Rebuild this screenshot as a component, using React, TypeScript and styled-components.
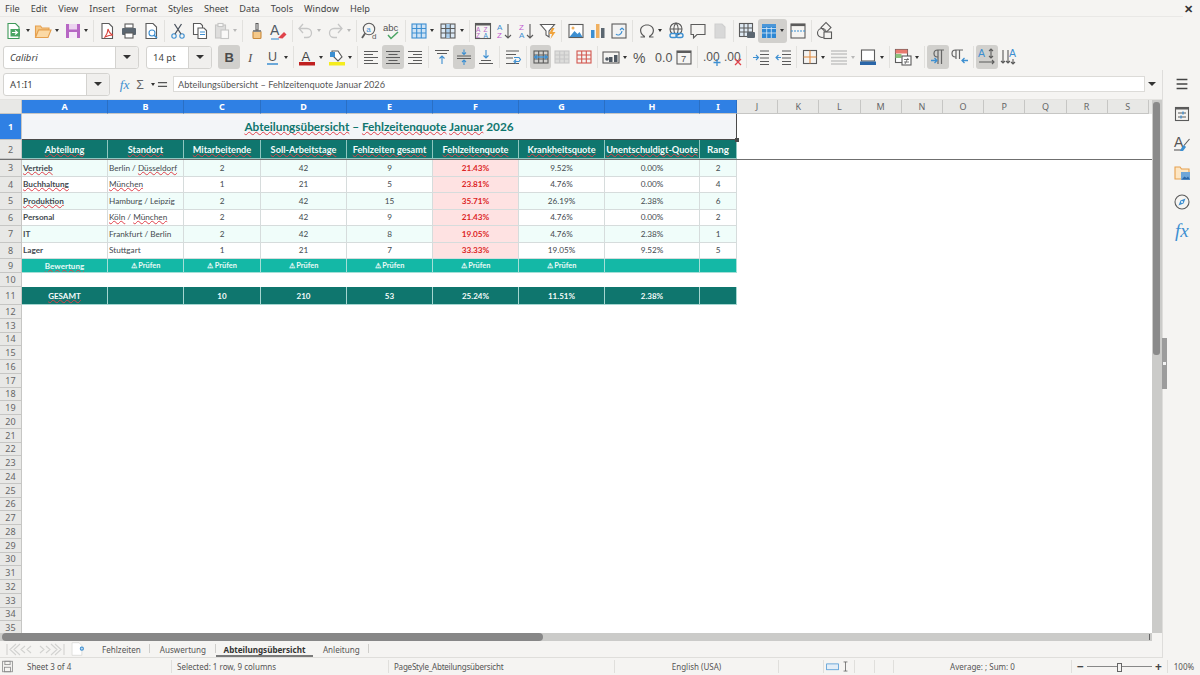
import { ReactNode } from "react";
import styled, { createGlobalStyle } from "styled-components";

const GlobalStyle = createGlobalStyle`
  html, body { margin: 0; padding: 0; background: #f5f4f2; }
  * { box-sizing: border-box; }
`;

const UI_FONT = `"Noto Sans", "Open Sans", sans-serif`;
const CELL_FONT = `Lato, "Liberation Sans", sans-serif`;

const BLUE = "#3d8fd1";
const GREY = "#5b5b5b";

const Page = styled.div`
  width: 1200px;
  height: 675px;
  display: flex;
  flex-direction: column;
  overflow: hidden;
  background: #f5f4f2;
  font-family: ${UI_FONT};
  color: #3c3c3c;
`;

const MenuBar = styled.div`
  height: 17px;
  display: flex;
  align-items: center;
  padding: 0 0 1px 5px;
  gap: 11px;
  font-size: 9.2px;
  color: #444;
  position: relative;
  &::after {
    content: "";
    position: absolute;
    left: 0;
    right: 17px;
    bottom: 0;
    height: 1px;
    background: #e9e8e6;
  }
`;

const CloseMark = styled.span`
  margin-left: auto;
  margin-right: 7px;
  font-size: 11px;
  font-weight: 700;
  color: #333;
`;

const Toolbar = styled.div<{ $h: number; $pl: number }>`
  height: ${(p) => p.$h}px;
  padding-left: ${(p) => p.$pl}px;
  display: flex;
  align-items: center;
`;

const ToolButton = styled.div<{ $active?: boolean; $drop?: boolean }>`
  width: ${(p) => (p.$drop ? 29.3 : 21.8)}px;
  height: 24px;
  flex: none;
  display: flex;
  align-items: center;
  padding-left: 1px;
  border-radius: 3px;
  background: ${(p) => (p.$active ? "#d1d0cd" : "transparent")};
`;

const Arrow = styled.span<{ $off?: boolean }>`
  width: 0;
  height: 0;
  margin-left: 1.5px;
  border-left: 2.5px solid transparent;
  border-right: 2.5px solid transparent;
  border-top: 3px solid ${(p) => (p.$off ? "#b8b8b8" : "#333")};
`;

const ToolSep = styled.div`
  width: 5.5px;
  height: 22px;
  flex: none;
  display: flex;
  justify-content: center;
  &::after {
    content: "";
    width: 1px;
    background: #e2e1de;
  }
`;

const Combo = styled.div<{ $w: number; $arrow: number; $mr?: number }>`
  width: ${(p) => p.$w}px;
  height: 23px;
  margin-right: ${(p) => p.$mr ?? 0}px;
  flex: none;
  display: grid;
  grid-template-columns: 1fr ${(p) => p.$arrow}px;
  background: #fff;
  border: 1px solid #d4d3d0;
  border-radius: 3px;
  font-size: 9.5px;
  color: #444;
`;

const ComboText = styled.span<{ $italic?: boolean }>`
  display: flex;
  align-items: center;
  padding-left: 6px;
  font-style: ${(p) => (p.$italic ? "italic" : "normal")};
`;

const ComboArrow = styled.span`
  display: flex;
  align-items: center;
  justify-content: center;
  background: #f0efed;
  border-left: 1px solid #d4d3d0;
  border-radius: 0 3px 3px 0;
  & > span {
    border-left-width: 4px;
    border-right-width: 4px;
    border-top-width: 4px;
    margin: 0;
  }
`;

const Body = styled.div`
  flex: 1;
  min-height: 0;
  display: flex;
`;

const Workspace = styled.div`
  flex: 1;
  min-width: 0;
  display: flex;
  flex-direction: column;
`;

const FormulaBar = styled.div`
  height: 30px;
  flex: none;
  display: flex;
  align-items: center;
  padding: 0 3px 1px 3px;
  border-bottom: 1px solid #e4e3e0;
`;

const FormulaIcons = styled.div`
  width: 63px;
  flex: none;
  display: flex;
  align-items: center;
  gap: 1px;
  padding-left: 9px;
`;

const FormulaInput = styled.div`
  flex: 1;
  height: 16px;
  display: flex;
  align-items: center;
  padding-left: 4px;
  background: #fff;
  border: 1px solid #dcdbd8;
  font-size: 9.2px;
  color: #555;
  font-family: ${CELL_FONT};
`;

const FormulaDrop = styled.div`
  width: 14px;
  display: flex;
  justify-content: center;
  & > span {
    border-left-width: 4px;
    border-right-width: 4px;
    border-top-width: 4px;
    margin: 0;
  }
`;

const SheetRow = styled.div`
  flex: 1;
  min-height: 0;
  display: flex;
  background: #fff;
`;

const Sheet = styled.div`
  flex: 1;
  min-width: 0;
  overflow: hidden;
  font-family: ${CELL_FONT};
`;

const COLUMNS = "22px 86px 76px 77px 86px 86px 86px 86px 95px 37px repeat(10, 41.2px) 1fr";

const HeadRow = styled.div`
  height: 14px;
  display: grid;
  grid-template-columns: ${COLUMNS};
  background: #e8e8e6;
`;

const ColHead = styled.div<{ $on?: boolean }>`
  display: flex;
  align-items: center;
  justify-content: center;
  font-size: 9px;
  font-family: ${UI_FONT};
  background: ${(p) => (p.$on ? "#2f80e4" : "#e8e8e6")};
  color: ${(p) => (p.$on ? "#fff" : "#666")};
  font-weight: ${(p) => (p.$on ? 700 : 400)};
  border-right: 1px solid ${(p) => (p.$on ? "#2a6fc4" : "#c6c6c4")};
  border-bottom: 1px solid #c6c6c4;
`;

const Row = styled.div<{ $h: number; $freeze?: boolean }>`
  height: ${(p) => p.$h}px;
  display: grid;
  grid-template-columns: ${COLUMNS};
  border-bottom: ${(p) => (p.$freeze ? "1.5px solid #6f6f6f" : "none")};
`;

const RowHead = styled.div<{ $on?: boolean }>`
  display: flex;
  align-items: center;
  justify-content: center;
  font-size: 9px;
  line-height: 1;
  font-family: ${UI_FONT};
  background: ${(p) => (p.$on ? "#2f80e4" : "#e8e8e6")};
  color: ${(p) => (p.$on ? "#fff" : "#666")};
  font-weight: ${(p) => (p.$on ? 700 : 400)};
  border-right: 1px solid #c6c6c4;
  border-bottom: 1px solid #c6c6c4;
`;

type Tone = "head" | "odd" | "even" | "rate" | "check" | "total";

const toneBg: Record<Tone, string> = {
  head: "#0f766e",
  odd: "#f0fdfa",
  even: "#ffffff",
  rate: "#fee2e2",
  check: "#14b8a6",
  total: "#0f766e",
};

const toneBorder: Record<Tone, string> = {
  head: "#8fc7c0",
  odd: "#d6dcdc",
  even: "#d6dcdc",
  rate: "#d6dcdc",
  check: "#a5dfd7",
  total: "#a5d6d0",
};

const toneText: Record<Tone, string> = {
  head: "#f4fbfa",
  odd: "#444a4f",
  even: "#444a4f",
  rate: "#dc2626",
  check: "#eafaf7",
  total: "#f4fbfa",
};

const Cell = styled.div<{ $tone: Tone; $left?: boolean; $bold?: boolean; $size?: number }>`
  display: flex;
  align-items: center;
  justify-content: ${(p) => (p.$left ? "flex-start" : "center")};
  padding-left: ${(p) => (p.$left ? 1 : 0)}px;
  white-space: nowrap;
  overflow: hidden;
  font-size: ${(p) => p.$size ?? 8.2}px;
  font-weight: ${(p) => (p.$bold ? 700 : 400)};
  background: ${(p) => toneBg[p.$tone]};
  color: ${(p) => toneText[p.$tone]};
  border-right: 1px solid ${(p) => toneBorder[p.$tone]};
  border-bottom: 1px solid ${(p) => toneBorder[p.$tone]};
`;

const TitleCell = styled.div`
  grid-column: 2 / span 9;
  position: relative;
  display: flex;
  align-items: center;
  justify-content: center;
  padding-bottom: 1px;
  background: #f3f5f8;
  color: #0f766e;
  font-size: 11.8px;
  font-weight: 700;
  border-right: 1.5px solid #4a4a4a;
  border-bottom: 1.5px solid #4a4a4a;
  &::after {
    content: "";
    position: absolute;
    right: -3px;
    bottom: -3px;
    width: 4px;
    height: 4px;
    background: #4a4a4a;
  }
`;

const Spell = styled.span`
  text-decoration: underline wavy #e0404a 0.8px;
  text-underline-offset: 0;
  text-decoration-skip-ink: none;
`;

const VScroll = styled.div`
  width: 10px;
  flex: none;
  background: #cbcbc9;
  padding: 2px 2px 0 1px;
`;

const VThumb = styled.div`
  height: 253px;
  background: #8a8a8a;
  border-radius: 3px;
`;

const HScroll = styled.div`
  height: 8px;
  width: 1152px;
  flex: none;
  padding-left: 2px;
  background: #cbcbc9;
  position: relative;
  &::after {
    content: "";
    position: absolute;
    right: 2px;
    top: 1px;
    width: 1px;
    height: 6px;
    background: #666;
  }
`;

const HThumb = styled.div`
  width: 541px;
  height: 100%;
  background: #878787;
  border-radius: 4px;
`;

const TabBar = styled.div`
  height: 17px;
  flex: none;
  display: flex;
  align-items: center;
  padding-left: 6px;
  font-size: 8.1px;
  color: #555;
  border-bottom: 1px solid #dfdedb;
`;

const NavGroup = styled.div`
  width: 59px;
  flex: none;
  display: flex;
  align-items: center;
`;

const NewSheet = styled.div`
  width: 27.5px;
  flex: none;
  display: flex;
  padding-left: 6px;
`;

const Tab = styled.div<{ $on?: boolean }>`
  height: 16px;
  display: flex;
  align-items: center;
  padding: 0 ${(p) => (p.$on ? 8 : 9.5)}px;
  font-weight: ${(p) => (p.$on ? 700 : 400)};
  color: ${(p) => (p.$on ? "#333" : "#555")};
  box-shadow: ${(p) => (p.$on ? "inset 0 -2px 0 #7a7a7a" : "none")};
  position: relative;
  &::after {
    content: "";
    position: absolute;
    right: 0;
    top: 3px;
    bottom: 4px;
    width: 1px;
    background: ${(p) => (p.$on ? "transparent" : "#cfcecb")};
  }
`;

const Deck = styled.div`
  width: 38px;
  flex: none;
  display: flex;
  flex-direction: column;
  align-items: center;
  padding-top: 4px;
  gap: 9.2px;
  border-left: 1px solid #dedddb;
  position: relative;
`;

const DeckHandle = styled.div`
  position: absolute;
  left: -1px;
  top: 268px;
  width: 5px;
  height: 51px;
  background: #9c9c9c;
  &::after {
    content: "";
    position: absolute;
    left: 1px;
    top: 24px;
    width: 3px;
    height: 3px;
    background: #f2f2f2;
  }
`;

const DeckMenu = styled.div`
  height: 20px;
  margin-bottom: 1px;
  display: flex;
  align-items: center;
`;

const StatusBar = styled.div`
  height: 17px;
  flex: none;
  display: grid;
  grid-template-columns: 22px 150px 217px 226px 164px 45px 31px 20px 19px 178px 96px 1fr;
  align-items: center;
  font-size: 8px;
  color: #555;
`;

const StatusCell = styled.div<{ $center?: boolean; $tight?: boolean }>`
  height: 13px;
  display: flex;
  align-items: center;
  justify-content: ${(p) => (p.$center ? "center" : "flex-start")};
  padding-left: ${(p) => (p.$center ? 0 : 5)}px;
  letter-spacing: ${(p) => (p.$tight ? "-0.22px" : "0")};
  border-right: 1px solid #e0dfdc;
  white-space: nowrap;
`;

const StatusLast = styled.div`
  display: flex;
  justify-content: center;
`;

const Zoom = styled.div`
  display: flex;
  align-items: center;
  justify-content: center;
  gap: 3px;
  height: 13px;
  font-size: 12px;
  font-weight: 700;
  border-right: 1px solid #e0dfdc;
  color: #444;
`;

const ZoomTrack = styled.div`
  width: 65px;
  height: 1px;
  background: #888;
  position: relative;
  &::after {
    content: "";
    position: absolute;
    left: 30px;
    top: -3px;
    width: 3px;
    height: 7px;
    background: #f5f4f2;
    border: 1px solid #666;
  }
`;

const Svg = ({ children, size = 20 }: { children: ReactNode; size?: number }) => (
  <svg width={size} height={size} viewBox="0 0 20 20" fill="none" strokeWidth="1.1">
    {children}
  </svg>
);

const Txt = ({ x, y, s, c, w, i, serif, t }: { x: number; y: number; s: number; c: string; w?: number; i?: boolean; serif?: boolean; t: string }) => (
  <text
    x={x}
    y={y}
    fontSize={s}
    fill={c}
    fontWeight={w}
    fontStyle={i ? "italic" : "normal"}
    fontFamily={serif ? "'Liberation Serif', serif" : "'Liberation Sans', sans-serif"}
    stroke="none"
  >
    {t}
  </text>
);

const gridLines = (c: string, fill = "none") => (
  <g stroke={c}>
    <rect x="3" y="4" width="14" height="12" fill={fill} />
    <path d="M3 8h14M3 12h14M7.7 4v12M12.3 4v12" />
  </g>
);

const icons: Record<string, ReactNode> = {
  newDoc: (
    <>
      <path d="M4 2.5h7.5l3.5 3.5v11.5H4z" stroke="#3f9a5a" fill="#fff" />
      <rect x="6.5" y="8" width="9.5" height="7.5" fill="#4aa564" />
      <path d="M8 11.5h5M11 9.5l2.5 2-2.5 2" stroke="#fff" />
    </>
  ),
  open: (
    <>
      <path d="M2.5 5h5l1.5 2h7v2H6L2.5 16z" fill="#f5c98a" stroke="#e6a04e" />
      <path d="M5.5 9h12.5l-3 7.5H2.5z" fill="#fbd9a5" stroke="#e6a04e" />
    </>
  ),
  save: (
    <>
      <path d="M3 3h14v14H3z" fill="#b767c4" />
      <rect x="6" y="3" width="8" height="5.5" fill="#ecd3f0" />
      <rect x="6" y="11" width="8" height="6" fill="#f6e9f8" />
    </>
  ),
  pdf: (
    <>
      <path d="M5 2.5h7l3.5 3.5v11.5H5z" stroke={GREY} fill="#fff" />
      <path d="M8 16c2-3 3-6 3-8 1 3 2 5 5 6-3 0-6 1-8 2z" stroke="#d8433c" />
    </>
  ),
  print: (
    <>
      <rect x="6" y="3" width="8" height="4" fill="#fff" stroke={GREY} />
      <rect x="3" y="7" width="14" height="7" rx="1" fill="#5b6670" />
      <rect x="6" y="12" width="8" height="5" fill="#fff" stroke={GREY} />
    </>
  ),
  preview: (
    <>
      <path d="M5 2.5h7l3.5 3.5v11.5H5z" stroke={GREY} fill="#fff" />
      <circle cx="11" cy="12" r="3" stroke={BLUE} />
      <path d="M13 14l3 3" stroke={BLUE} strokeWidth="1.5" />
    </>
  ),
  cut: (
    <g stroke={BLUE}>
      <circle cx="6" cy="15" r="2.2" />
      <circle cx="14" cy="15" r="2.2" />
      <path d="M7 13L13.5 3M13 13L6.5 3" stroke="#4d5560" strokeWidth="1.3" />
    </g>
  ),
  copy: (
    <g stroke={GREY} fill="#fff">
      <path d="M3.5 2.5h7l2 2v9h-9z" />
      <path d="M8 7h6l2.5 2.5v8H8z" />
      <path d="M10 11h5M10 13.5h5" stroke={BLUE} />
    </g>
  ),
  paste: (
    <g opacity=".5">
      <rect x="3.5" y="4" width="10" height="13" fill="#c8c8c8" stroke="#999" />
      <rect x="6" y="2.5" width="5" height="3" fill="#fff" stroke="#999" />
      <rect x="9" y="9" width="7.5" height="8.5" fill="#fff" stroke="#999" />
    </g>
  ),
  clone: (
    <>
      <rect x="6" y="10" width="8" height="7.5" rx="1" fill="#f5c98a" stroke="#c98a3c" />
      <path d="M6 9h8v2H6z" fill="#888" />
      <path d="M9 2.5h2V9H9z" fill="#fff" stroke={GREY} />
    </>
  ),
  clear: (
    <>
      <Txt x={2} y={14} s={14} c="#4f5862" t="A" />
      <path d="M10 17l6-6 2.5 2.5-4 4z" fill="#e0434b" />
      <path d="M3 18h8" stroke={BLUE} />
    </>
  ),
  undo: <path d="M7 3L3 7.5 7 12M3 7.5h8a4.5 4.5 0 0 1 0 9H8" stroke="#c6c6c6" strokeWidth="1.3" />,
  redo: <path d="M13 3l4 4.5-4 4.5M17 7.5H9a4.5 4.5 0 0 0 0 9h3" stroke="#c6c6c6" strokeWidth="1.3" />,
  find: (
    <>
      <circle cx="9" cy="8" r="5.7" stroke={GREY} />
      <path d="M5 12.5L2 17" stroke={GREY} strokeWidth="1.8" />
      <Txt x={6.3} y={10.5} s={8} c={BLUE} t="a" />
      <Txt x={12} y={18} s={8} c={GREY} t="d" />
    </>
  ),
  spell: (
    <>
      <Txt x={1} y={10} s={9.5} c="#555" t="abc" />
      <path d="M6 14l3 3.5L16 11" stroke="#4aa564" strokeWidth="1.5" />
    </>
  ),
  tableRows: (
    <>
      <rect x="3" y="3" width="14" height="14" fill="#cfe3f5" stroke={BLUE} />
      <path d="M3 7.5h14M3 12h14M7.7 3v14M12.3 3v14" stroke={BLUE} />
    </>
  ),
  tableCols: (
    <>
      <rect x="3" y="3" width="14" height="14" fill="#dbe9f5" stroke={GREY} />
      <rect x="7.7" y="3" width="4.6" height="14" fill="#a9cdec" />
      <path d="M3 7.5h14M3 12h14M7.7 3v14M12.3 3v14" stroke={GREY} />
    </>
  ),
  sortBox: (
    <>
      <rect x="2.5" y="2.5" width="15" height="15" stroke={GREY} />
      <path d="M2.5 3.5h15" stroke={GREY} strokeWidth="2" />
      <Txt x={3} y={10.5} s={6.5} c="#b767c4" t="A" />
      <Txt x={10.5} y={10.5} s={6.5} c="#b767c4" t="Z" />
      <Txt x={3} y={16.5} s={6.5} c="#b767c4" t="Z" />
      <Txt x={10.5} y={16.5} s={6.5} c={BLUE} t="A" />
    </>
  ),
  sortAz: (
    <>
      <Txt x={2} y={9} s={8} c={BLUE} t="A" />
      <Txt x={2} y={17} s={8} c="#c15bd0" t="Z" />
      <path d="M13 3v14M10 14l3 3 3-3" stroke={GREY} />
    </>
  ),
  sortZa: (
    <>
      <Txt x={2} y={9} s={8} c="#c15bd0" t="Z" />
      <Txt x={2} y={17} s={8} c={BLUE} t="A" />
      <path d="M13 3v14M10 14l3 3 3-3" stroke={GREY} />
    </>
  ),
  filter: (
    <>
      <path d="M2.5 3.5h14L11 10v6l-3-2v-4z" stroke={GREY} fill="#fff" />
      <path d="M14 7l-3 6h3l-1.5 5 5-7h-3l2-4z" fill="#f0a33c" />
    </>
  ),
  image: (
    <>
      <rect x="3" y="3.5" width="14" height="13" stroke={GREY} fill="#fff" />
      <path d="M3.5 16l5-6 3 3 2-2 3 5z" fill={BLUE} />
      <circle cx="7" cy="7" r="1.5" fill="#f0b060" />
    </>
  ),
  chart: (
    <>
      <rect x="3" y="9" width="3.5" height="8" fill={BLUE} />
      <rect x="8" y="3" width="3.5" height="14" fill="#f0b060" />
      <rect x="13" y="7" width="3.5" height="10" fill="#5b6670" />
    </>
  ),
  pivot: (
    <>
      <rect x="3" y="3" width="14" height="14" stroke={GREY} fill="#f2f2f2" />
      <path d="M7 13c1 1.5 5 2 6-3M13 7l-2 2M13 7l2 2" stroke={BLUE} />
    </>
  ),
  omega: <path d="M8 16.5H3.5v-1H6.500C4.500 14 3 12 3 9.500 3 6 6 3.500 10 3.500s7 2.500 7 6c0 2.500-1.500 4.500-3.500 6h3v1H12v-1.500c2-1.200 3.800-3.200 3.800-5.500 0-3-2.500-5-5.800-5s-5.800 2-5.800 5c0 2.300 1.800 4.300 3.800 5.500z" fill={GREY} />,
  link: (
    <>
      <circle cx="10" cy="8" r="6" stroke={GREY} />
      <path d="M4 8h12M10 2c-3 3-3 9 0 12M10 2c3 3 3 9 0 12" stroke={GREY} />
      <rect x="4" y="12.5" width="7" height="4" rx="2" stroke={BLUE} strokeWidth="1.4" fill="#f5f4f2" />
      <rect x="10" y="12.5" width="7" height="4" rx="2" stroke={BLUE} strokeWidth="1.4" />
    </>
  ),
  comment: <path d="M3 3.5h14v10H9l-3.5 3.5v-3.5H3z" stroke={GREY} />,
  headers: <path d="M5 3h7l3 3v11H5z" fill="#d8d8d8" stroke="#cfcfcf" />,
  defPrint: (
    <>
      <rect x="2.5" y="2.5" width="13" height="13" stroke={GREY} fill="#dfeaf4" />
      <path d="M2.5 7h13M2.5 11h13M7 2.5v13M11 2.5v13" stroke={GREY} />
      <rect x="10" y="11" width="8" height="6" rx="1" fill="#5b6670" />
    </>
  ),
  freeze: (
    <>
      <rect x="3" y="3" width="14" height="14" fill="#2d87d3" />
      <path d="M3 7.5h14M3 12h14M7.7 3v14M12.3 3v14" stroke="#dcebf7" strokeWidth=".8" />
      <path d="M3 3h14v3H3z" fill="#4a96d8" />
    </>
  ),
  split: (
    <>
      <rect x="3" y="3" width="14" height="14" stroke={GREY} />
      <path d="M3 4h14" stroke={GREY} strokeWidth="2.2" />
      <path d="M3 10h14" stroke={BLUE} strokeDasharray="2 1" />
    </>
  ),
  shapes: (
    <>
      <rect x="7.5" y="3" width="7" height="7" transform="rotate(45 11 6.5)" stroke={GREY} />
      <circle cx="7" cy="12" r="4.5" stroke={GREY} />
      <rect x="9" y="11" width="7.5" height="6.5" stroke={GREY} fill="#f5f4f2" />
    </>
  ),
  bold: <Txt x={5.5} y={15} s={13} w={700} c="#4a4a4a" t="B" />,
  italic: <Txt x={7} y={15} s={13} i c="#555" t="I" serif />,
  underline: (
    <>
      <Txt x={5} y={14} s={12.5} c="#555" t="U" />
      <path d="M4 17h11" stroke={BLUE} strokeWidth="1.5" />
    </>
  ),
  fontColor: (
    <>
      <Txt x={4.5} y={13.5} s={13} c="#444" t="A" />
      <rect x="2" y="15" width="16" height="3.5" fill="#c02020" />
    </>
  ),
  bgColor: (
    <>
      <path d="M5 4h6l4 6-4 4-6-6z" stroke={GREY} fill="#fff" />
      <path d="M3 5h5v5H3z" fill={BLUE} />
      <rect x="2" y="15" width="16" height="3.5" fill="#f5ec1e" />
    </>
  ),
  alignL: <path d="M3 4.5h14M3 7.5h9M3 10.5h14M3 13.5h9M3 16.5h14" stroke={GREY} />,
  alignC: <path d="M3 4.5h14M5.5 7.5h9M3 10.5h14M5.5 13.5h9M3 16.5h14" stroke={GREY} />,
  alignR: <path d="M3 4.5h14M8 7.5h9M3 10.5h14M8 13.5h9M3 16.5h14" stroke={GREY} />,
  vTop: (
    <>
      <path d="M3 3.5h14M5 6.5h10" stroke={GREY} />
      <path d="M10 17V9M7.5 11.5L10 9l2.5 2.5" stroke={BLUE} />
    </>
  ),
  vCenter: (
    <>
      <path d="M3 9h14M3 11.5h14" stroke={GREY} />
      <path d="M10 2.5v5M8 5.5l2 2 2-2M10 18v-5M8 15l2-2 2 2" stroke={BLUE} />
    </>
  ),
  vBottom: (
    <>
      <path d="M3 16.5h14M5 13.5h10" stroke={GREY} />
      <path d="M10 3v8M7.5 8.5L10 11l2.5-2.5" stroke={BLUE} />
    </>
  ),
  wrap: (
    <>
      <path d="M3 4h13M3 7.5h10M3 11h7M3 16.5h13" stroke={GREY} />
      <path d="M11 10.5h5l1.5 2-1.5 2h-4M13 12.5l-2 2 2 2" stroke={BLUE} />
    </>
  ),
  merge: (
    <>
      {gridLines(GREY)}
      <path d="M3 10h14M6 8l-2 2 2 2M14 8l2 2-2 2" stroke={BLUE} strokeWidth="1.3" />
    </>
  ),
  mergeOff: gridLines("#c6c6c6", "#dddddb"),
  unmerge: gridLines("#d2574f"),
  numFmt: (
    <>
      <rect x="2" y="5" width="16" height="11" stroke={GREY} />
      <rect x="8" y="10" width="3.5" height="5" fill="#4f5862" />
      <rect x="13" y="8" width="3.5" height="7" fill="#4f5862" />
      <circle cx="6" cy="12" r="1.8" fill="#4f5862" />
    </>
  ),
  percent: <Txt x={2} y={15.5} s={14} c="#555" t="%" />,
  numZero: <Txt x={2} y={15} s={12.5} c="#555" t="0.0" />,
  date: (
    <>
      <rect x="3" y="4" width="14" height="13" stroke={GREY} />
      <path d="M3 5h14" stroke={GREY} strokeWidth="2" />
      <Txt x={7} y={15} s={9.5} c="#555" t="7" />
    </>
  ),
  addDec: (
    <>
      <Txt x={1} y={14} s={12} c="#555" t=".00" />
      <path d="M15 12v7M11.5 15.5h7" stroke={BLUE} strokeWidth="1.3" />
    </>
  ),
  delDec: (
    <>
      <Txt x={1} y={14} s={12} c="#555" t=".00" />
      <path d="M12 12l6 6M18 12l-6 6" stroke="#e0434b" strokeWidth="1.3" />
    </>
  ),
  indent: (
    <>
      <path d="M9 4h9M9 7.5h9M9 11h9M9 14.5h9M9 17.5h9" stroke={GREY} />
      <path d="M2 10.5h5M5 8l2.5 2.5L5 13" stroke={BLUE} />
    </>
  ),
  outdent: (
    <>
      <path d="M9 4h9M9 7.5h9M9 11h9M9 14.5h9M9 17.5h9" stroke={GREY} />
      <path d="M8 10.5H3M5.5 8L3 10.5 5.5 13" stroke={BLUE} />
    </>
  ),
  borders: (
    <>
      <rect x="3.5" y="3.5" width="13" height="13" stroke={GREY} />
      <path d="M10 3.5v13M3.5 10h13" stroke="#e0893c" />
    </>
  ),
  borderStyle: <path d="M2 4h16M2 7h16M2 10.5h16M2 14h16M2 17h16" stroke="#c4c4c4" strokeWidth="1.3" />,
  borderColor: (
    <>
      <rect x="3.5" y="3" width="13" height="11" fill="#fff" stroke={GREY} />
      <rect x="2" y="14.5" width="16" height="3.5" fill="#2a66a8" />
    </>
  ),
  cond: (
    <>
      <rect x="2.5" y="2.5" width="12" height="13" stroke={GREY} fill="#fff" />
      <rect x="2.5" y="2.5" width="12" height="4" fill="#e87b6f" />
      <rect x="2.5" y="7" width="6" height="4" fill="#8ac27c" />
      <rect x="9" y="9" width="9" height="9" fill="#fff" stroke={GREY} />
      <path d="M11 12.5h5M11 15h5M15 11l-3 6" stroke={GREY} strokeWidth=".8" />
    </>
  ),
  ltr: (
    <>
      <path d="M10 3v14M13.5 3v14M16 3H9.5a3.5 3.5 0 0 0 0 7H10" stroke="#666" strokeWidth="1.2" />
      <path d="M3 13.5h6M6.5 11L9 13.5 6.5 16" stroke={BLUE} strokeWidth="1.3" />
    </>
  ),
  rtl: (
    <>
      <path d="M6 3v9M9.5 3v9M13 3H5.5a3.5 3.5 0 0 0 0 7H6" stroke="#666" strokeWidth="1.2" />
      <path d="M18 13.5h-6M14.5 11L12 13.5l2.5 2.5" stroke={BLUE} strokeWidth="1.3" />
    </>
  ),
  textH: (
    <>
      <Txt x={1} y={10} s={10.5} c={BLUE} t="A" />
      <path d="M14 2v9M12 4l2-2 2 2M12 9l2 2 2-2M2 15h15M15 13l2 2-2 2" stroke={GREY} />
    </>
  ),
  textV: (
    <>
      <Txt x={10} y={10} s={10.5} c={BLUE} t="A" />
      <path d="M4 3v13M2 14l2 2 2-2M9 3v13M7 14l2 2 2-2M14 12v5M12 15l2 2 2-2" stroke={GREY} />
    </>
  ),
  deckProps: (
    <>
      <rect x="3.5" y="3.5" width="13" height="13" stroke={GREY} />
      <path d="M3.5 4.5h13" stroke={GREY} strokeWidth="2" />
      <path d="M6 9h8M6 13h8" stroke={GREY} />
      <path d="M11 7.5v3M9 11.5v3" stroke={BLUE} strokeWidth="1.3" />
    </>
  ),
  deckStyles: (
    <>
      <Txt x={2} y={14} s={14} c="#555" t="A" />
      <path d="M2 17h9" stroke={GREY} />
      <path d="M17.5 6L12 12.5" stroke={GREY} />
      <path d="M10 14l2-2 2 2-3 4h-3z" fill={BLUE} />
    </>
  ),
  deckGallery: (
    <>
      <path d="M3 4h5l1.5 2H17v10H3z" stroke="#e6a04e" fill="#fde6c4" />
      <rect x="9" y="9" width="9" height="8" fill="#6fa6d8" />
      <path d="M9.5 16.5l3-3 2 1.5 1.5-1.5 2 3z" fill="#2a66a8" />
    </>
  ),
  deckNav: (
    <>
      <circle cx="10" cy="10" r="7" stroke={GREY} />
      <path d="M13.5 6.5l-2 5-5 2 2-5z" fill={BLUE} />
      <circle cx="10" cy="10" r="1" fill="#fff" />
    </>
  ),
  saveSmall: (
    <>
      <rect x="3.5" y="3" width="13" height="14" stroke="#8a8a8a" />
      <rect x="6.5" y="3" width="7" height="4.5" stroke="#8a8a8a" />
      <rect x="6" y="11" width="8" height="6" stroke="#8a8a8a" />
    </>
  ),
  newTab: (
    <>
      <path d="M1.5 1h10l4 4v14h-14z" fill="#fff" stroke="#d8d8d6" />
      <circle cx="15.5" cy="9.5" r="3" fill={BLUE} />
      <path d="M13.8 9.5h3.4M15.5 7.800v3.400" stroke="#fff" strokeWidth=".8" />
    </>
  ),
  selMode: <rect x="1" y="6" width="18" height="9" stroke={BLUE} fill="#e4eef7" />,
};

type Item = { i: string; drop?: boolean; off?: boolean; on?: boolean } | "sep";

const topTools: Item[] = [
  { i: "newDoc", drop: true },
  { i: "open", drop: true },
  { i: "save", drop: true },
  "sep",
  { i: "pdf" },
  { i: "print" },
  { i: "preview" },
  "sep",
  { i: "cut" },
  { i: "copy" },
  { i: "paste", drop: true, off: true },
  "sep",
  { i: "clone" },
  { i: "clear" },
  "sep",
  { i: "undo", drop: true, off: true },
  { i: "redo", drop: true, off: true },
  "sep",
  { i: "find" },
  { i: "spell" },
  "sep",
  { i: "tableRows", drop: true },
  { i: "tableCols", drop: true },
  "sep",
  { i: "sortBox" },
  { i: "sortAz" },
  { i: "sortZa" },
  { i: "filter" },
  "sep",
  { i: "image" },
  { i: "chart" },
  { i: "pivot" },
  "sep",
  { i: "omega", drop: true },
  { i: "link" },
  { i: "comment" },
  { i: "headers" },
  "sep",
  { i: "defPrint" },
  { i: "freeze", drop: true, on: true },
  { i: "split" },
  "sep",
  { i: "shapes" },
];

const formatTools: Item[] = [
  { i: "bold", on: true },
  { i: "italic" },
  { i: "underline", drop: true },
  "sep",
  { i: "fontColor", drop: true },
  { i: "bgColor", drop: true },
  "sep",
  { i: "alignL" },
  { i: "alignC", on: true },
  { i: "alignR" },
  "sep",
  { i: "vTop" },
  { i: "vCenter", on: true },
  { i: "vBottom" },
  "sep",
  { i: "wrap" },
  "sep",
  { i: "merge", on: true },
  { i: "mergeOff" },
  { i: "unmerge" },
  "sep",
  { i: "numFmt", drop: true },
  { i: "percent" },
  { i: "numZero" },
  { i: "date" },
  "sep",
  { i: "addDec" },
  { i: "delDec" },
  "sep",
  { i: "indent" },
  { i: "outdent" },
  "sep",
  { i: "borders", drop: true },
  { i: "borderStyle", drop: true, off: true },
  { i: "borderColor", drop: true },
  "sep",
  { i: "cond", drop: true },
  "sep",
  { i: "ltr", on: true },
  { i: "rtl" },
  "sep",
  { i: "textH", on: true },
  { i: "textV" },
];

const Tools = ({ items }: { items: Item[] }) => (
  <>
    {items.map((t, n) =>
      t === "sep" ? (
        <ToolSep key={n} />
      ) : (
        <ToolButton key={n} $active={t.on} $drop={t.drop}>
          <Svg>{icons[t.i]}</Svg>
          {t.drop && <Arrow $off={t.off} />}
        </ToolButton>
      ),
    )}
  </>
);

const MENUS = ["File", "Edit", "View", "Insert", "Format", "Styles", "Sheet", "Data", "Tools", "Window", "Help"];
const COL_NAMES = ["A", "B", "C", "D", "E", "F", "G", "H", "I", "J", "K", "L", "M", "N", "O", "P", "Q", "R", "S"];

const HEADERS: [string, boolean][] = [
  ["Abteilung", true],
  ["Standort", true],
  ["Mitarbeitende", true],
  ["Soll-Arbeitstage", true],
  ["Fehlzeiten gesamt", true],
  ["Fehlzeitenquote", true],
  ["Krankheitsquote", true],
  ["Unentschuldigt-Quote", true],
  ["Rang", false],
];

const DATA: { name: string; spell: boolean; site: ReactNode; vals: string[] }[] = [
  { name: "Vertrieb", spell: true, site: <>Berlin / <Spell>Düsseldorf</Spell></>, vals: ["2", "42", "9", "21.43%", "9.52%", "0.00%", "2"] },
  { name: "Buchhaltung", spell: true, site: <Spell>München</Spell>, vals: ["1", "21", "5", "23.81%", "4.76%", "0.00%", "4"] },
  { name: "Produktion", spell: true, site: "Hamburg / Leipzig", vals: ["2", "42", "15", "35.71%", "26.19%", "2.38%", "6"] },
  { name: "Personal", spell: false, site: <><Spell>Köln</Spell> / <Spell>München</Spell></>, vals: ["2", "42", "9", "21.43%", "4.76%", "0.00%", "2"] },
  { name: "IT", spell: false, site: "Frankfurt / Berlin", vals: ["2", "42", "8", "19.05%", "4.76%", "2.38%", "1"] },
  { name: "Lager", spell: false, site: "Stuttgart", vals: ["1", "21", "7", "33.33%", "19.05%", "9.52%", "5"] },
];

const RATING = ["⚠ Prüfen", "⚠ Prüfen", "⚠ Prüfen", "⚠ Prüfen", "⚠ Prüfen", "⚠ Prüfen", "", ""];
const TOTALS = ["", "10", "210", "53", "25.24%", "11.51%", "2.38%", ""];
const EMPTY_ROWS = Array.from({ length: 24 }, (_, n) => n + 12);

export default function App() {
  return (
    <Page>
      <GlobalStyle />
      <MenuBar>
        {MENUS.map((m) => (
          <span key={m}>{m}</span>
        ))}
        <CloseMark>✕</CloseMark>
      </MenuBar>
      <Toolbar $h={27} $pl={3}>
        <Tools items={topTools} />
      </Toolbar>
      <Toolbar $h={26} $pl={3}>
        <Combo $w={136} $arrow={23} $mr={7}>
          <ComboText $italic>Calibri</ComboText>
          <ComboArrow><Arrow /></ComboArrow>
        </Combo>
        <Combo $w={66} $arrow={23} $mr={6}>
          <ComboText>14 pt</ComboText>
          <ComboArrow><Arrow /></ComboArrow>
        </Combo>
        <Tools items={formatTools} />
      </Toolbar>
      <Body>
        <Workspace>
          <FormulaBar>
            <Combo $w={107} $arrow={23}>
              <ComboText>A1:I1</ComboText>
              <ComboArrow><Arrow /></ComboArrow>
            </Combo>
            <FormulaIcons>
              <Svg size={15}><Txt x={1} y={16} s={18} i serif c={BLUE} t="fx" /></Svg>
              <Svg size={13}><Txt x={2} y={17} s={19} c="#666" t="Σ" /></Svg>
              <Arrow />
              <Svg size={13}><path d="M3 7h14M3 13h14" stroke="#555" strokeWidth="2" /></Svg>
            </FormulaIcons>
            <FormulaInput>Abteilungsübersicht – Fehlzeitenquote Januar 2026</FormulaInput>
            <FormulaDrop><Arrow /></FormulaDrop>
          </FormulaBar>
          <SheetRow>
            <Sheet>
              <HeadRow>
                <ColHead />
                {COL_NAMES.map((c, n) => (
                  <ColHead key={c} $on={n < 9}>{c}</ColHead>
                ))}
              </HeadRow>
              <Row $h={26}>
                <RowHead $on>1</RowHead>
                <TitleCell>
                  <span>
                    <Spell>Abteilungsübersicht</Spell> – <Spell>Fehlzeitenquote</Spell> <Spell>Januar</Spell> 2026
                  </span>
                </TitleCell>
              </Row>
              <Row $h={20} $freeze>
                <RowHead>2</RowHead>
                {HEADERS.map(([h, s]) => (
                  <Cell key={h} $tone="head" $bold $size={h === "Rang" ? 9.8 : 9.2}>
                    {s ? <Spell>{h}</Spell> : h}
                  </Cell>
                ))}
              </Row>
              {DATA.map((d, r) => {
                const tone: Tone = r % 2 === 0 ? "odd" : "even";
                return (
                  <Row key={d.name} $h={16.5}>
                    <RowHead>{r + 3}</RowHead>
                    <Cell $tone={tone} $left $bold>
                      {d.spell ? <Spell>{d.name}</Spell> : d.name}
                    </Cell>
                    <Cell $tone={tone} $left>
                      <span>{d.site}</span>
                    </Cell>
                    {d.vals.map((v, c) => (
                      <Cell key={c} $tone={c === 3 ? "rate" : tone} $bold={c === 3}>{v}</Cell>
                    ))}
                  </Row>
                );
              })}
              <Row $h={14}>
                <RowHead>9</RowHead>
                <Cell $tone="check" $bold $size={8}><Spell>Bewertung</Spell></Cell>
                {RATING.map((v, c) => (
                  <Cell key={c} $tone="check" $bold $size={7.4}>{v}</Cell>
                ))}
              </Row>
              <Row $h={14}>
                <RowHead>10</RowHead>
              </Row>
              <Row $h={18}>
                <RowHead>11</RowHead>
                <Cell $tone="total" $bold $size={8}><Spell>GESAMT</Spell></Cell>
                {TOTALS.map((v, c) => (
                  <Cell key={c} $tone="total" $bold $size={8}>{v}</Cell>
                ))}
              </Row>
              {EMPTY_ROWS.map((n) => (
                <Row key={n} $h={13.75}>
                  <RowHead>{n}</RowHead>
                </Row>
              ))}
            </Sheet>
            <VScroll>
              <VThumb />
            </VScroll>
          </SheetRow>
          <HScroll>
            <HThumb />
          </HScroll>
          <TabBar>
            <NavGroup>
              <svg width="59" height="15" viewBox="0 0 59 15" fill="none" stroke="#d2d2d0" strokeWidth="1.1">
                <path d="M1 2v11M10 2L4 7.5 10 13M14 2L8 7.5 14 13M19 4l-4 3.5 4 3.5M25 4l-4 3.5 4 3.5" />
                <path d="M34 4l4 3.5-4 3.5M40 4l4 3.5-4 3.5M45 2l6 5.5-6 5.5M49 2l6 5.5-6 5.5M58 2v11" />
              </svg>
            </NavGroup>
            <NewSheet>
              <Svg size={14}>{icons.newTab}</Svg>
            </NewSheet>
            <Tab>Fehlzeiten</Tab>
            <Tab>Auswertung</Tab>
            <Tab $on>Abteilungsübersicht</Tab>
            <Tab>Anleitung</Tab>
          </TabBar>
        </Workspace>
        <Deck>
          <DeckHandle />
          <DeckMenu>
            <Svg size={18}><path d="M4 5h12M4 10h12M4 15h12" stroke="#444" strokeWidth="1.4" /></Svg>
          </DeckMenu>
          <Svg>{icons.deckProps}</Svg>
          <Svg>{icons.deckStyles}</Svg>
          <Svg>{icons.deckGallery}</Svg>
          <Svg>{icons.deckNav}</Svg>
          <Svg><Txt x={3} y={16} s={19} i serif c={BLUE} t="fx" /></Svg>
        </Deck>
      </Body>
      <StatusBar>
        <Svg size={15}>{icons.saveSmall}</Svg>
        <StatusCell>Sheet 3 of 4</StatusCell>
        <StatusCell>Selected: 1 row, 9 columns</StatusCell>
        <StatusCell $tight>PageStyle_Abteilungsübersicht</StatusCell>
        <StatusCell $center>English (USA)</StatusCell>
        <StatusCell />
        <StatusCell $center>
          <Svg size={13}>{icons.selMode}</Svg>
          <Svg size={13}><path d="M7 3h6M7 17h6M10 3v14" stroke="#555" /></Svg>
        </StatusCell>
        <StatusCell />
        <StatusCell />
        <StatusCell $center>Average: ; Sum: 0</StatusCell>
        <Zoom>
          <span>−</span>
          <ZoomTrack />
          <span>+</span>
        </Zoom>
        <StatusLast>100%</StatusLast>
      </StatusBar>
    </Page>
  );
}
